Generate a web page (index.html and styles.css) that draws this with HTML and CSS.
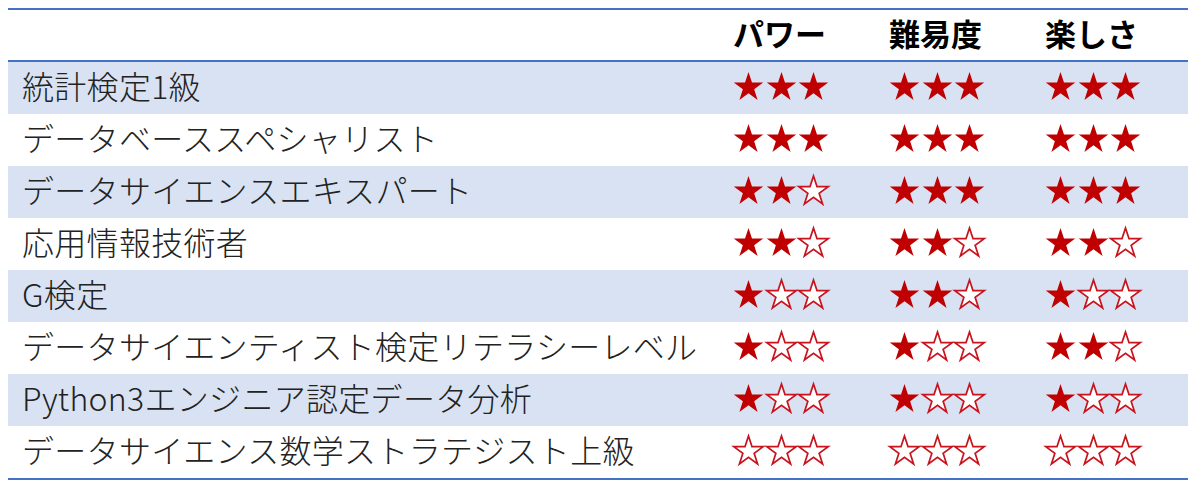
FILE: index.html
```html
<!DOCTYPE html>
<html lang="ja">
<head>
<meta charset="utf-8">
<link rel="stylesheet" href="styles.css">
</head>
<body>
<svg class="defs" width="0" height="0" aria-hidden="true">
  <defs>
    <polygon id="star" points="50,0 61.23,34.55 97.55,34.55 68.17,55.9 79.39,90.45 50,69.1 20.61,90.45 31.83,55.9 2.45,34.55 38.77,34.55"/>
  </defs>
</svg>
<div class="table">
  <div class="row head">
    <div class="name"></div>
    <div class="cell">パワー</div>
    <div class="cell">難易度</div>
    <div class="cell">楽しさ</div>
  </div>
  <div class="row band">
    <div class="name">統計検定1級</div>
    <div class="cell"><span class="stars"><svg class="s f" viewBox="0 -2 100 95"><use href="#star"/></svg><svg class="s f" viewBox="0 -2 100 95"><use href="#star"/></svg><svg class="s f" viewBox="0 -2 100 95"><use href="#star"/></svg></span></div>
    <div class="cell"><span class="stars"><svg class="s f" viewBox="0 -2 100 95"><use href="#star"/></svg><svg class="s f" viewBox="0 -2 100 95"><use href="#star"/></svg><svg class="s f" viewBox="0 -2 100 95"><use href="#star"/></svg></span></div>
    <div class="cell"><span class="stars"><svg class="s f" viewBox="0 -2 100 95"><use href="#star"/></svg><svg class="s f" viewBox="0 -2 100 95"><use href="#star"/></svg><svg class="s f" viewBox="0 -2 100 95"><use href="#star"/></svg></span></div>
  </div>
  <div class="row">
    <div class="name">データベーススペシャリスト</div>
    <div class="cell"><span class="stars"><svg class="s f" viewBox="0 -2 100 95"><use href="#star"/></svg><svg class="s f" viewBox="0 -2 100 95"><use href="#star"/></svg><svg class="s f" viewBox="0 -2 100 95"><use href="#star"/></svg></span></div>
    <div class="cell"><span class="stars"><svg class="s f" viewBox="0 -2 100 95"><use href="#star"/></svg><svg class="s f" viewBox="0 -2 100 95"><use href="#star"/></svg><svg class="s f" viewBox="0 -2 100 95"><use href="#star"/></svg></span></div>
    <div class="cell"><span class="stars"><svg class="s f" viewBox="0 -2 100 95"><use href="#star"/></svg><svg class="s f" viewBox="0 -2 100 95"><use href="#star"/></svg><svg class="s f" viewBox="0 -2 100 95"><use href="#star"/></svg></span></div>
  </div>
  <div class="row band">
    <div class="name">データサイエンスエキスパート</div>
    <div class="cell"><span class="stars"><svg class="s f" viewBox="0 -2 100 95"><use href="#star"/></svg><svg class="s f" viewBox="0 -2 100 95"><use href="#star"/></svg><svg class="s o" viewBox="0 -2 100 95"><use href="#star"/></svg></span></div>
    <div class="cell"><span class="stars"><svg class="s f" viewBox="0 -2 100 95"><use href="#star"/></svg><svg class="s f" viewBox="0 -2 100 95"><use href="#star"/></svg><svg class="s f" viewBox="0 -2 100 95"><use href="#star"/></svg></span></div>
    <div class="cell"><span class="stars"><svg class="s f" viewBox="0 -2 100 95"><use href="#star"/></svg><svg class="s f" viewBox="0 -2 100 95"><use href="#star"/></svg><svg class="s f" viewBox="0 -2 100 95"><use href="#star"/></svg></span></div>
  </div>
  <div class="row">
    <div class="name">応用情報技術者</div>
    <div class="cell"><span class="stars"><svg class="s f" viewBox="0 -2 100 95"><use href="#star"/></svg><svg class="s f" viewBox="0 -2 100 95"><use href="#star"/></svg><svg class="s o" viewBox="0 -2 100 95"><use href="#star"/></svg></span></div>
    <div class="cell"><span class="stars"><svg class="s f" viewBox="0 -2 100 95"><use href="#star"/></svg><svg class="s f" viewBox="0 -2 100 95"><use href="#star"/></svg><svg class="s o" viewBox="0 -2 100 95"><use href="#star"/></svg></span></div>
    <div class="cell"><span class="stars"><svg class="s f" viewBox="0 -2 100 95"><use href="#star"/></svg><svg class="s f" viewBox="0 -2 100 95"><use href="#star"/></svg><svg class="s o" viewBox="0 -2 100 95"><use href="#star"/></svg></span></div>
  </div>
  <div class="row band">
    <div class="name">G検定</div>
    <div class="cell"><span class="stars"><svg class="s f" viewBox="0 -2 100 95"><use href="#star"/></svg><svg class="s o" viewBox="0 -2 100 95"><use href="#star"/></svg><svg class="s o" viewBox="0 -2 100 95"><use href="#star"/></svg></span></div>
    <div class="cell"><span class="stars"><svg class="s f" viewBox="0 -2 100 95"><use href="#star"/></svg><svg class="s f" viewBox="0 -2 100 95"><use href="#star"/></svg><svg class="s o" viewBox="0 -2 100 95"><use href="#star"/></svg></span></div>
    <div class="cell"><span class="stars"><svg class="s f" viewBox="0 -2 100 95"><use href="#star"/></svg><svg class="s o" viewBox="0 -2 100 95"><use href="#star"/></svg><svg class="s o" viewBox="0 -2 100 95"><use href="#star"/></svg></span></div>
  </div>
  <div class="row">
    <div class="name">データサイエンティスト検定リテラシーレベル</div>
    <div class="cell"><span class="stars"><svg class="s f" viewBox="0 -2 100 95"><use href="#star"/></svg><svg class="s o" viewBox="0 -2 100 95"><use href="#star"/></svg><svg class="s o" viewBox="0 -2 100 95"><use href="#star"/></svg></span></div>
    <div class="cell"><span class="stars"><svg class="s f" viewBox="0 -2 100 95"><use href="#star"/></svg><svg class="s o" viewBox="0 -2 100 95"><use href="#star"/></svg><svg class="s o" viewBox="0 -2 100 95"><use href="#star"/></svg></span></div>
    <div class="cell"><span class="stars"><svg class="s f" viewBox="0 -2 100 95"><use href="#star"/></svg><svg class="s f" viewBox="0 -2 100 95"><use href="#star"/></svg><svg class="s o" viewBox="0 -2 100 95"><use href="#star"/></svg></span></div>
  </div>
  <div class="row band">
    <div class="name">Python3エンジニア認定データ分析</div>
    <div class="cell"><span class="stars"><svg class="s f" viewBox="0 -2 100 95"><use href="#star"/></svg><svg class="s o" viewBox="0 -2 100 95"><use href="#star"/></svg><svg class="s o" viewBox="0 -2 100 95"><use href="#star"/></svg></span></div>
    <div class="cell"><span class="stars"><svg class="s f" viewBox="0 -2 100 95"><use href="#star"/></svg><svg class="s o" viewBox="0 -2 100 95"><use href="#star"/></svg><svg class="s o" viewBox="0 -2 100 95"><use href="#star"/></svg></span></div>
    <div class="cell"><span class="stars"><svg class="s f" viewBox="0 -2 100 95"><use href="#star"/></svg><svg class="s o" viewBox="0 -2 100 95"><use href="#star"/></svg><svg class="s o" viewBox="0 -2 100 95"><use href="#star"/></svg></span></div>
  </div>
  <div class="row last">
    <div class="name">データサイエンス数学ストラテジスト上級</div>
    <div class="cell"><span class="stars"><svg class="s o" viewBox="0 -2 100 95"><use href="#star"/></svg><svg class="s o" viewBox="0 -2 100 95"><use href="#star"/></svg><svg class="s o" viewBox="0 -2 100 95"><use href="#star"/></svg></span></div>
    <div class="cell"><span class="stars"><svg class="s o" viewBox="0 -2 100 95"><use href="#star"/></svg><svg class="s o" viewBox="0 -2 100 95"><use href="#star"/></svg><svg class="s o" viewBox="0 -2 100 95"><use href="#star"/></svg></span></div>
    <div class="cell"><span class="stars"><svg class="s o" viewBox="0 -2 100 95"><use href="#star"/></svg><svg class="s o" viewBox="0 -2 100 95"><use href="#star"/></svg><svg class="s o" viewBox="0 -2 100 95"><use href="#star"/></svg></span></div>
  </div>
</div>
</body>
</html>
```

FILE: styles.css
```css
html, body {
  background: #ffffff;
}
body {
  margin: 8px 0 0 8px;
  font-family: "Noto Sans CJK JP", "Noto Sans", sans-serif;
  color: #222222;
}
.defs {
  position: absolute;
  width: 0;
  height: 0;
  overflow: hidden;
}
.table {
  width: 1180px;
  border-top: 2px solid #4472c4;
}
.row {
  display: grid;
  grid-template-columns: 710px 156px 156px 1fr;
  height: 52px;
  align-items: center;
}
.row.head {
  height: 50px;
  border-bottom: 2px solid #4472c4;
  font-weight: 700;
  color: #000000;
}
.row.band {
  background: #d9e2f3;
}
.row.last {
  border-bottom: 2px solid #4472c4;
}
.name {
  padding-left: 14px;
  font-size: 32px;
  font-weight: 300;
  letter-spacing: 0.3px;
  line-height: 1;
  white-space: nowrap;
  padding-bottom: 7px;
}
.head .cell {
  font-size: 31px;
  line-height: 1;
  padding-bottom: 6px;
}
.cell {
  padding-left: 15px;
  display: flex;
  align-items: center;
}
.stars {
  display: flex;
  gap: 1.7px;
  padding-bottom: 4px;
}
.s {
  width: 31px;
  height: 30px;
  display: block;
  overflow: visible;
}
.s.f {
  fill: #c00000;
}
.s.o {
  fill: #ffffff;
  stroke: #c8141e;
  stroke-width: 5.5;
  stroke-linejoin: miter;
}
```
